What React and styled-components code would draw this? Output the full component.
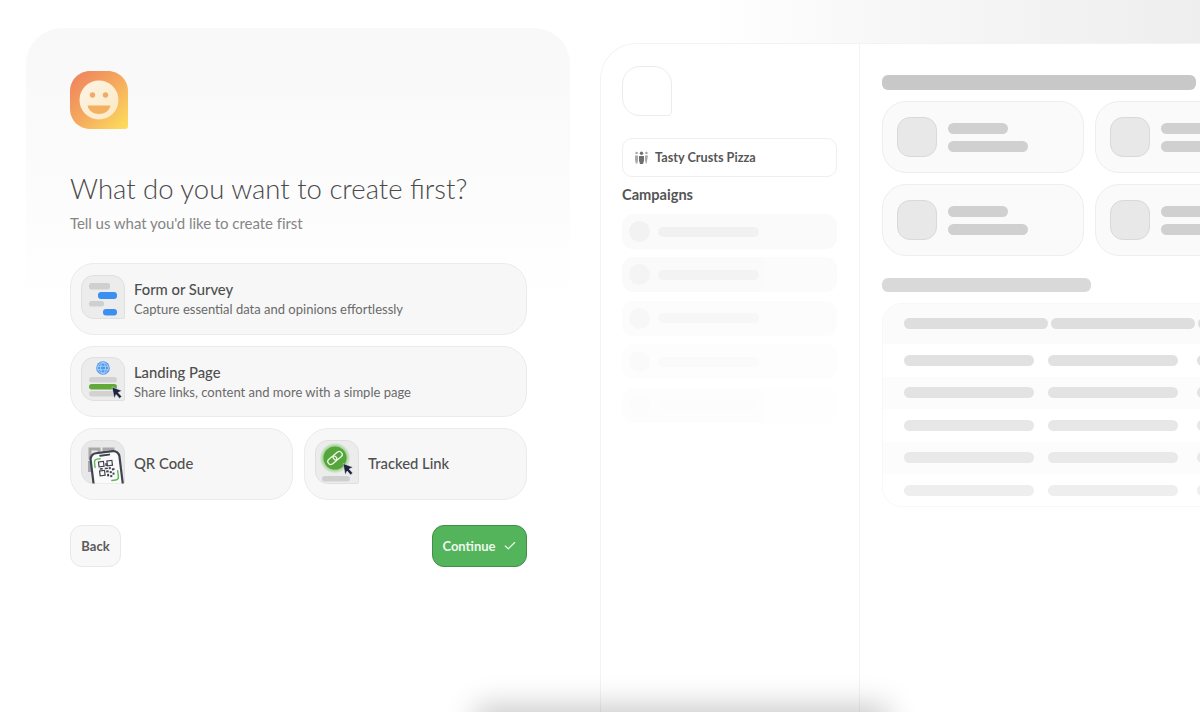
import React from "react";
import styled, { createGlobalStyle } from "styled-components";
import { Check } from "lucide-react";

const GlobalStyle = createGlobalStyle`
  html, body { margin: 0; padding: 0; background: #fff; }
  * { box-sizing: border-box; }
  body { font-family: "Lato", "Noto Sans", sans-serif; }
`;

// --- Page ---
const Page = styled.div`
  position: relative;
  display: flex;
  width: 1200px;
  height: 712px;
  overflow: hidden;
  background: #fff;
`;

const BottomGlow = styled.div`
  position: absolute;
  left: 484px;
  top: 714px;
  width: 396px;
  height: 20px;
  box-shadow: 0 0 30px 8px rgba(0, 0, 0, 0.22);
`;

// --- Left column ---
const LeftColumn = styled.section`
  flex: 0 0 600px;
  padding: 28px 30px 0 26px;
`;

const WizardCard = styled.div`
  height: 100%;
  padding: 43px 43px 0 44px;
  border-radius: 36px 36px 0 0;
  background: linear-gradient(#f8f8f8 0, #fbfbfb 130px, #fff 280px);
`;

const Logo = styled.svg`
  display: block;
  width: 58px;
  height: 58px;
`;

const Heading = styled.h1`
  margin: 42px 0 0;
  font-size: 27.5px;
  line-height: 36px;
  font-weight: 300;
  color: #4a4a4a;
`;

const Subheading = styled.p`
  margin: 6px 0 0;
  font-size: 15px;
  line-height: 20px;
  letter-spacing: -0.05px;
  color: #858585;
`;

const OptionGrid = styled.div`
  display: grid;
  grid-template-columns: 1fr 1fr;
  gap: 11px;
  margin-top: 30px;
`;

const OptionCard = styled.div`
  grid-column: ${({ $wide }) => ($wide ? "1 / -1" : "auto")};
  display: flex;
  align-items: center;
  gap: 9px;
  height: 71.5px;
  padding: 0 10px;
  border: 1px solid #ebebeb;
  border-radius: 24px;
  background: #f7f7f7;
`;

const Tile = styled.svg`
  flex: none;
  display: block;
  width: 44px;
  height: 44px;
  margin-bottom: 4px;
`;

const OptionText = styled.div`
  display: flex;
  flex-direction: column;
  gap: 1px;
`;

const OptionTitle = styled.span`
  font-size: 14.8px;
  line-height: 20px;
  font-weight: 500;
  color: #4f4f4f;
`;

const OptionLabel = styled(OptionTitle)`
  margin-bottom: 2px;
`;

const OptionDescription = styled.span`
  font-size: 13px;
  line-height: 18px;
  color: #6a6a6a;
`;

const Actions = styled.div`
  display: flex;
  justify-content: space-between;
  margin-top: 25.500px;
`;

const BackButton = styled.button`
  width: 51px;
  height: 42px;
  padding: 0;
  border: 1px solid #e8e8e8;
  border-radius: 12px;
  background: #f8f8f8;
  font: 700 13px "Lato", sans-serif;
  color: #5a5a5a;
`;

const ContinueButton = styled.button`
  display: flex;
  align-items: center;
  justify-content: center;
  gap: 7px;
  width: 95px;
  height: 42px;
  padding: 0;
  border: 1px solid #3f8f46;
  border-radius: 12px;
  background: #53b45c;
  font: 700 13px "Lato", sans-serif;
  color: #eef8ee;
`;

// --- Preview ---
const PreviewColumn = styled.section`
  flex: 1;
  min-width: 0;
  padding-top: 43px;
  background: linear-gradient(90deg, #fff 18%, #f8f8f8 45%, #eeeeee 100%) top / 100% 43px no-repeat;
`;

const PreviewPanel = styled.div`
  display: flex;
  width: 900px;
  height: 100%;
  border-top: 1px solid #f3f3f3;
  border-left: 1px solid #f3f3f3;
  border-radius: 36px 0 0 0;
  background: #fff;
`;

const Sidebar = styled.aside`
  flex: 0 0 259px;
  padding: 22px 22px 0 21px;
  border-right: 1px solid #f3f3f3;
`;

const BrandPlaceholder = styled.div`
  width: 50px;
  height: 50px;
  border: 1px solid #ececec;
  border-radius: 18px 18px 4px 18px;
`;

const WorkspaceSelect = styled.div`
  display: flex;
  align-items: center;
  gap: 6px;
  height: 39px;
  margin-top: 22px;
  padding: 0 11px 1px;
  border: 1px solid #efefef;
  border-radius: 10px;
  font-size: 12.7px;
  font-weight: 700;
  color: #575757;
`;

const SidebarTitle = styled.h2`
  margin: 8px 0 9px;
  font-size: 14.6px;
  line-height: 20px;
  font-weight: 700;
  color: #555;
`;

const CampaignList = styled.div`
  display: flex;
  flex-direction: column;
  gap: 8.400px;
`;

const CampaignRow = styled.div`
  display: flex;
  align-items: center;
  gap: 8px;
  height: 35px;
  padding: 0 7px;
  border-radius: 11px;
  background: #fafafa;
`;

const CampaignDot = styled.span`
  width: 21px;
  height: 21px;
  border-radius: 50%;
  background: #f2f2f2;
`;

const Skeleton = styled.span`
  display: block;
  flex: none;
  width: ${({ $w }) => $w}px;
  height: ${({ $h = 11 }) => $h}px;
  border-radius: 6px;
  background: ${({ $c = "#d0d0d0" }) => $c};
`;

const Main = styled.main`
  flex: 1;
  padding: 31px 0 0 22px;
`;

const StatGrid = styled.div`
  display: grid;
  grid-template-columns: repeat(3, 202px);
  gap: 11px;
  margin: 11px 0 22px;
`;

const StatCard = styled.div`
  display: flex;
  align-items: center;
  gap: 11px;
  height: 72px;
  padding: 0 14px;
  border: 1px solid #eeeeee;
  border-radius: 24px;
  background: #fafafa;
`;

const StatIcon = styled.div`
  flex: none;
  width: 40px;
  height: 40px;
  border: 1px solid #d9d9d9;
  border-radius: 13px;
  background: #e8e8e8;
`;

const StatLines = styled.div`
  display: flex;
  flex-direction: column;
  gap: 7px;
`;

const DataTable = styled.div`
  width: 500px;
  height: 204px;
  margin-top: 11px;
  border: 1px solid #f7f7f7;
  border-radius: 20px 0 0 20px;
  overflow: hidden;
`;

const HeaderRow = styled.div`
  display: flex;
  gap: 3px;
  height: 40px;
  padding: 14px 0 0 21px;
  background: #fbfbfb;
`;

const TableRow = styled.div`
  display: grid;
  grid-template-columns: 144px 149px 130px;
  align-items: center;
  height: 32.500px;
  padding-left: 21px;
  background: ${({ $striped }) => ($striped ? "#fcfcfc" : "#fff")};
`;

// --- Drawings ---
const tileFrame = "M13 .5h18c7 0 12.500 5.500 12.500 12.500v29a1.500 1.500 0 0 1-1.500 1.500H13C6 43.500.5 38 .5 31V13C.5 6 6 .5 13 .5z";

const TileBase = ({ children }) => (
  <Tile viewBox="0 0 44 44">
    <path d={tileFrame} fill="#ececec" stroke="#e0e0e0" />
    {children}
  </Tile>
);

const Cursor = ({ x, y }) => (
  <path
    transform={`translate(${x} ${y})`}
    d="M0 0l10 3.800-3.900 1.800 3.600 3.900-2.100 1.900-3.500-3.900-1.800 4z"
    fill="#1c2340"
    stroke="#f5f5f5"
    strokeWidth=".5"
  />
);

const SmileyLogo = () => (
  <Logo viewBox="0 0 58 58">
    <defs>
      <linearGradient id="logoBg" x1="0" y1="0" x2="1" y2="1">
        <stop offset="0" stopColor="#ee7f5e" />
        <stop offset=".5" stopColor="#f5a95e" />
        <stop offset="1" stopColor="#fde05c" />
      </linearGradient>
      <linearGradient id="logoFace" x1="0" y1="0" x2="1" y2="1">
        <stop offset="0" stopColor="#fdf4e6" />
        <stop offset="1" stopColor="#fbe9c4" />
      </linearGradient>
    </defs>
    <path d="M20 0h18c11 0 20 9 20 20v35a3 3 0 0 1-3 3H20C9 58 0 49 0 38V20C0 9 9 0 20 0z" fill="url(#logoBg)" />
    <circle cx="29" cy="29" r="19.500" fill="url(#logoFace)" />
    <circle cx="22.500" cy="24" r="2.700" fill="#f0ab68" />
    <circle cx="35.500" cy="24" r="2.700" fill="#f0ab68" />
    <path d="M17.500 34.500h23c-1 5-6 8.500-11.500 8.500s-10.500-3.500-11.500-8.500z" fill="#f3b05e" />
  </Logo>
);

const FormIcon = () => (
  <TileBase>
    <rect x="8" y="8" width="21" height="6.500" rx="2.500" fill="#cfcfcf" />
    <rect x="17" y="17" width="19" height="7" rx="3" fill="#3b8ff0" />
    <rect x="8" y="26" width="15" height="5.500" rx="2.500" fill="#cfcfcf" />
    <rect x="22" y="34" width="14" height="6.500" rx="3" fill="#3b8ff0" />
  </TileBase>
);

const LandingIcon = () => (
  <TileBase>
    <circle cx="22" cy="11" r="6.800" fill="#4b97ee" />
    <g fill="none" stroke="#bcd9f8" strokeWidth=".8">
      <circle cx="22" cy="11" r="5.400" />
      <ellipse cx="22" cy="11" rx="2.400" ry="5.400" />
      <path d="M16.800 9.200h10.400M16.800 12.800h10.400" />
    </g>
    <rect x="8" y="20" width="28" height="5.500" rx="2.700" fill="#d2d2d2" />
    <rect x="8" y="34" width="28" height="5.500" rx="2.700" fill="#d2d2d2" />
    <rect x="8" y="27" width="28" height="5.500" rx="2.700" fill="#62a83a" />
    <Cursor x={31} y={30} />
  </TileBase>
);

const QrIcon = () => (
  <Tile viewBox="0 0 44 44">
    <defs>
      <clipPath id="qrClip">
        <path d={tileFrame} />
      </clipPath>
    </defs>
    <path d={tileFrame} fill="#e8e8e8" stroke="#e0e0e0" />
    <g clipPath="url(#qrClip)">
      <g fill="none" stroke="#a9a9a9" strokeWidth="3">
        <rect x="9" y="9" width="9" height="9" />
        <rect x="23" y="9" width="9" height="9" />
      </g>
      <rect x="7" y="21" width="6" height="11" fill="#a9a9a9" />
      <g transform="rotate(-7 26 30)">
        <rect x="11" y="12" width="29" height="44" rx="6" fill="#fafafa" stroke="#3f4350" strokeWidth="2.200" />
        <rect x="20" y="14" width="11" height="2" rx="1" fill="#3f4350" />
        <g fill="none" stroke="#3f4350" strokeWidth="1.200">
          <rect x="18.500" y="21" width="5" height="5" />
          <rect x="27" y="21" width="5" height="5" />
          <rect x="18.500" y="30" width="5" height="5" />
        </g>
        <g fill="#3f4350">
          <rect x="25" y="23" width="1.500" height="3" />
          <rect x="19" y="27.500" width="3" height="1.500" />
          <rect x="24" y="27.500" width="3" height="1.500" />
          <rect x="28" y="27.500" width="2" height="2" />
          <rect x="31" y="29" width="2.500" height="2" />
          <rect x="25" y="30.500" width="2.500" height="2" />
          <rect x="28.500" y="31.500" width="2" height="2" />
          <rect x="25.500" y="34" width="2" height="2.500" />
          <rect x="31" y="33.500" width="2" height="2" />
          <rect x="28.500" y="35.500" width="2" height="2" />
        </g>
        <g fill="none" stroke="#5cb85c" strokeWidth="1.400" strokeLinecap="round">
          <path d="M14.500 26v-5a3 3 0 0 1 3-3h3" />
          <path d="M36.500 32v6a3 3 0 0 1-3 3h-4" />
        </g>
      </g>
    </g>
  </Tile>
);

const LinkIcon = () => (
  <TileBase>
    <defs>
      <radialGradient id="linkGlow">
        <stop offset=".7" stopColor="#6fc45c" stopOpacity=".75" />
        <stop offset="1" stopColor="#6fc45c" stopOpacity="0" />
      </radialGradient>
    </defs>
    <circle cx="20" cy="18" r="15.500" fill="url(#linkGlow)" />
    <circle cx="20" cy="18" r="11.500" fill="#55a53a" />
    <g fill="none" stroke="#f3f8ee" strokeWidth="1.200" transform="rotate(-40 20 18)">
      <rect x="11.500" y="15" width="10" height="6" rx="3" />
      <rect x="18.500" y="15" width="10" height="6" rx="3" />
    </g>
    <rect x="7" y="36" width="28" height="5.500" rx="2.700" fill="#cfcfcf" />
    <Cursor x={28} y={23.500} />
  </TileBase>
);

const GroupIcon = () => (
  <svg width="15" height="15" viewBox="0 0 15 15" style={{ flex: "none" }}>
    <g fill="#a8a8a8">
      <circle cx="2.600" cy="3" r="1.300" />
      <circle cx="12.400" cy="3" r="1.300" />
      <path d="M1 5.500h3v4.500l-.6 3.500H1.800L1 10zM11 5.500h3l-.8 4.500-.6 3.500h-.8l-.8-3.500z" />
    </g>
    <g fill="#707070">
      <circle cx="7.500" cy="3.200" r="1.700" />
      <path d="M5 6h5v4.500L9 14H6l-1-3.500z" />
    </g>
  </svg>
);

// --- Data ---
const CAMPAIGN_FADE = [1, 0.8, 0.55, 0.35, 0.2];
const STATS = [0, 1, 2, 3, 4, 5];
const ROW_COLORS = ["#e1e1e1", "#e3e3e3", "#e7e7e7", "#e9e9e9", "#eeeeee"];

const App = () => {
  return (
    <Page>
      <GlobalStyle />
      <LeftColumn>
        <WizardCard>
          <SmileyLogo />
          <Heading>What do you want to create first?</Heading>
          <Subheading>Tell us what you'd like to create first</Subheading>
          <OptionGrid>
            <OptionCard $wide>
              <FormIcon />
              <OptionText>
                <OptionTitle>Form or Survey</OptionTitle>
                <OptionDescription>Capture essential data and opinions effortlessly</OptionDescription>
              </OptionText>
            </OptionCard>
            <OptionCard $wide>
              <LandingIcon />
              <OptionText>
                <OptionTitle>Landing Page</OptionTitle>
                <OptionDescription>Share links, content and more with a simple page</OptionDescription>
              </OptionText>
            </OptionCard>
            <OptionCard>
              <QrIcon />
              <OptionLabel>QR Code</OptionLabel>
            </OptionCard>
            <OptionCard>
              <LinkIcon />
              <OptionLabel>Tracked Link</OptionLabel>
            </OptionCard>
          </OptionGrid>
          <Actions>
            <BackButton>Back</BackButton>
            <ContinueButton>
              Continue <Check size={14} strokeWidth={2} />
            </ContinueButton>
          </Actions>
        </WizardCard>
      </LeftColumn>

      <PreviewColumn>
        <PreviewPanel>
          <Sidebar>
            <BrandPlaceholder />
            <WorkspaceSelect>
              <GroupIcon />
              Tasty Crusts Pizza
            </WorkspaceSelect>
            <SidebarTitle>Campaigns</SidebarTitle>
            <CampaignList>
              {CAMPAIGN_FADE.map((fade) => (
                <CampaignRow key={fade} style={{ opacity: fade }}>
                  <CampaignDot />
                  <Skeleton $w={101} $h={10} $c="#f1f1f1" />
                </CampaignRow>
              ))}
            </CampaignList>
          </Sidebar>
          <Main>
            <Skeleton $w={314} $h={15} $c="#c8c8c8" />
            <StatGrid>
              {STATS.map((id) => (
                <StatCard key={id}>
                  <StatIcon />
                  <StatLines>
                    <Skeleton $w={60} />
                    <Skeleton $w={80} />
                  </StatLines>
                </StatCard>
              ))}
            </StatGrid>
            <Skeleton $w={209} $h={14} $c="#d9d9d9" />
            <DataTable>
              <HeaderRow>
                <Skeleton $w={144} $c="#dedede" />
                <Skeleton $w={144} $c="#dedede" />
                <Skeleton $w={144} $c="#dedede" />
              </HeaderRow>
              {ROW_COLORS.map((color, i) => (
                <TableRow key={color} $striped={i % 2 === 1}>
                  <Skeleton $w={130} $c={color} />
                  <Skeleton $w={130} $c={color} />
                  <Skeleton $w={130} $c={color} />
                </TableRow>
              ))}
            </DataTable>
          </Main>
        </PreviewPanel>
      </PreviewColumn>
      <BottomGlow />
    </Page>
  );
};

export default App;
